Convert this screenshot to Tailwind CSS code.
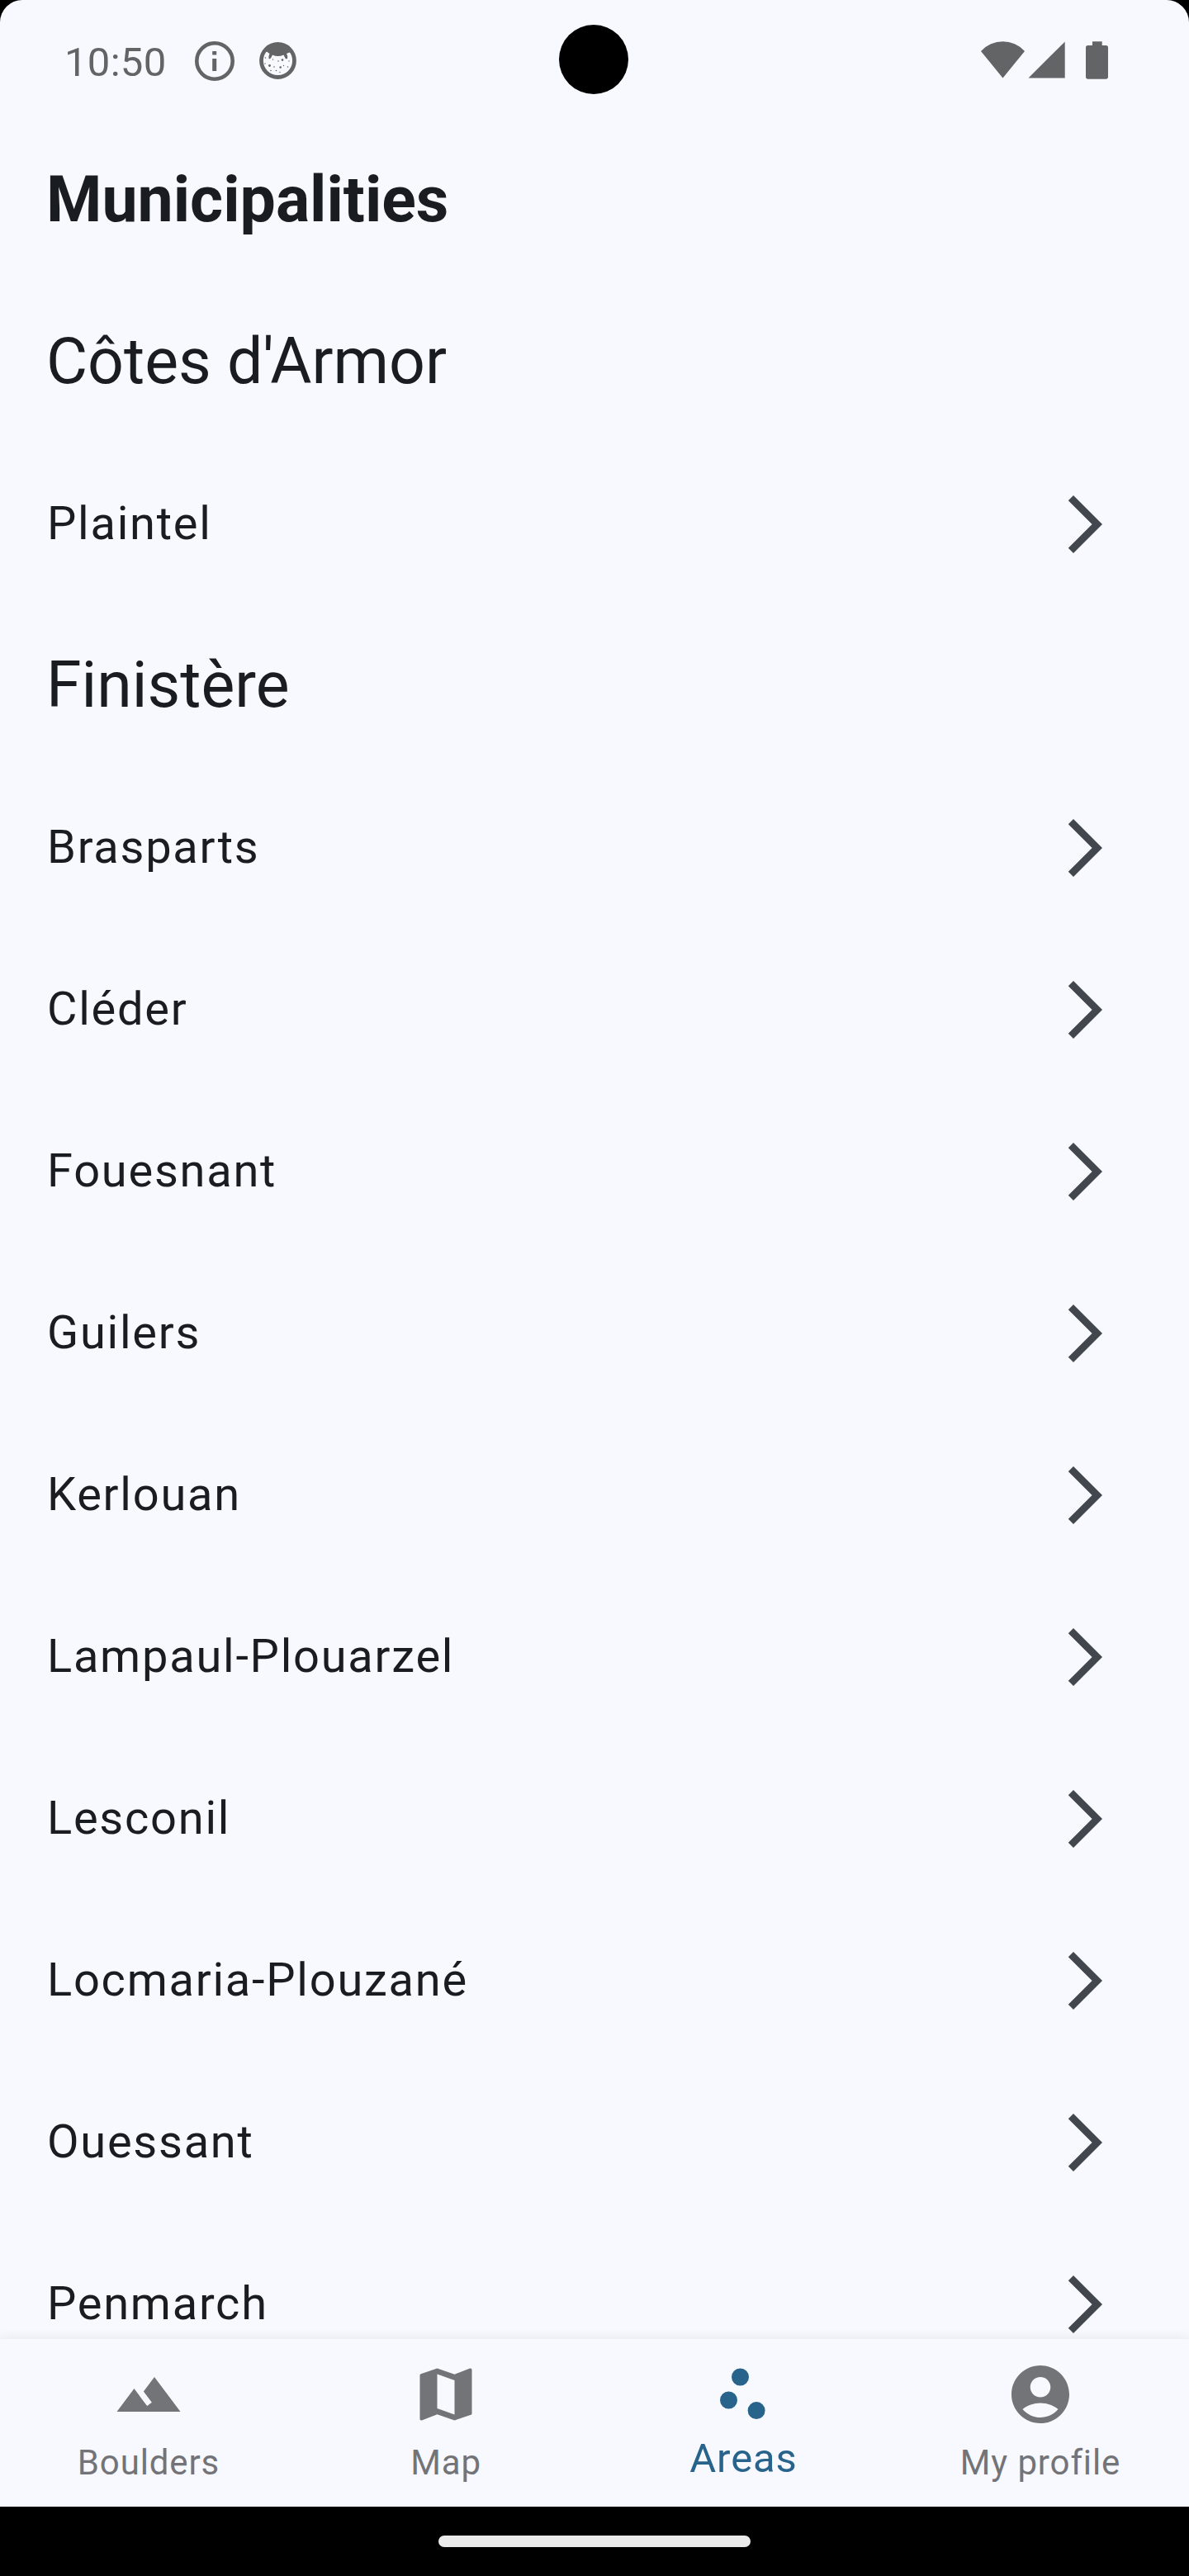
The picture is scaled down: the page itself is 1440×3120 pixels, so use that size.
<!DOCTYPE html>
<html lang="en">
<head>
<meta charset="utf-8">
<title>Municipalities</title>
<script src="https://cdn.jsdelivr.net/npm/@tailwindcss/browser@4"></script>
</head>
<body class="bg-black">
<div class="relative flex h-[3120px] w-[1440px] flex-col overflow-hidden bg-black font-[Roboto,sans-serif] text-[#191c20]">
  <div class="flex h-[3036px] flex-col overflow-hidden rounded-t-[27px] bg-[#f8f9ff]">
    <header class="flex h-[145px] shrink-0 items-start justify-between pl-[78px] pr-[98px] text-[#636466]">
      <div class="flex pt-[47px]">
        <span class="w-[158px] text-[49px] leading-[58px] tracking-[0.3px]">10:50</span>
        <svg class="mt-[3px] size-[48px]" viewBox="0 0 48 48"><circle cx="24" cy="24" r="21.7" fill="none" stroke="currentColor" stroke-width="4.6"/><path fill="currentColor" d="M21.2 12h5v4.500h-5zM21.200 21h5v15h-5z"/></svg>
        <svg class="ml-[30px] mt-[4px] size-[45px]" viewBox="0 0 45 45" fill="currentColor"><circle cx="22.500" cy="22.500" r="20" fill="none" stroke="currentColor" stroke-width="4.800"/><path d="M5 13 Q12 2 22.500 2 T40 13 L36.500 12.500 L33 14 Q35 17 34 20 Q31.500 21 31 18.500 L29.500 15.500 Q22.500 18.500 16 15.500 L14.500 18.500 Q13.500 21 11.500 20 Q11 17 12.500 14 L9 11.500z"/><circle cx="12.500" cy="28.500" r="1.400"/><circle cx="25.700" cy="30.500" r="1.300"/><circle cx="28" cy="21.600" r="1.300"/><circle cx="16.500" cy="21" r=".7"/><circle cx="23" cy="23" r=".8"/><circle cx="18" cy="30" r=".8"/><circle cx="14" cy="34.500" r=".8"/><circle cx="20.500" cy="34.500" r=".8"/><circle cx="25" cy="36.500" r=".7"/><circle cx="29.500" cy="28.500" r=".7"/><circle cx="34.500" cy="30" r=".8"/><circle cx="36" cy="23" r=".7"/><circle cx="7.500" cy="19" r=".8"/><circle cx="7" cy="26" r=".7"/></svg>
      </div>
      <div class="flex items-start pt-[50px]">
        <svg class="h-[45px] w-[53px]" viewBox="0 0 53 45" fill="currentColor"><path d="M0 12 A35.900 35.900 0 0 1 53 12 L26.500 44.500z"/></svg>
        <svg class="ml-[4px] h-[45px] w-[45px]" viewBox="0 0 45 45" fill="currentColor"><path d="M.5 44.500 L44.700 .5 V44.500z"/></svg>
        <svg class="ml-[25px] h-[46px] w-[27px]" viewBox="0 0 27 46" fill="currentColor"><path d="M8 .3h11.700V5H24.500a2.500 2.500 0 0 1 2.500 2.500V43a2.700 2.700 0 0 1-2.700 2.700H2.700A2.700 2.700 0 0 1 0 43V7.500A2.500 2.500 0 0 1 2.500 5H8z"/></svg>
      </div>
    </header>
    <h1 class="flex h-[196px] shrink-0 items-center px-[56px] pb-[2px] text-[77px] font-bold leading-[98px]">Municipalities</h1>
    <main id="list" class="h-[2492px] shrink-0 overflow-hidden"></main>
    <nav id="nav" class="relative flex h-[203px] shrink-0 bg-[#f8f9ff] text-[#737478] shadow-[0_0_14px_rgba(0,0,0,0.09)]"></nav>
  </div>
  <footer class="flex h-[84px] justify-center pt-[35px]"><div class="h-[14px] w-[378px] rounded-full bg-[#ebebeb]"></div></footer>
  <div class="absolute left-[677px] top-[30px] size-[84px] rounded-full bg-black"></div>
</div>
<script>
const groups = [
  ["Côtes d'Armor", ["Plaintel"]],
  ["Finistère", ["Brasparts", "Cléder", "Fouesnant", "Guilers", "Kerlouan", "Lampaul-Plouarzel", "Lesconil", "Locmaria-Plouzané", "Ouessant", "Penmarch"]],
];
document.getElementById("list").innerHTML = groups.map(([name, towns]) =>
  `<h2 class="flex h-[196px] items-center px-[56px] pb-[2px] text-[77px] leading-[98px]">${name}</h2>` +
  towns.map(t => `<div class="flex h-[196px] items-center justify-between pl-[57px] pr-[84px]"><span class="pb-[2px] text-[56px] leading-[84px] tracking-[1.75px]">${t}</span><svg class="size-[84px] text-[#42474e]" viewBox="0 0 24 24" fill="currentColor"><path d="M6.23 20.23 8 22l10-10L8 2 6.230 3.770 14.460 12z"/></svg></div>`).join("")
).join("");
const tabs = [
  ["Boulders", "M14 6l-3.750 5 2.850 3.800-1.600 1.200C9.810 13.750 7 10 7 10l-6 8h22L14 6z"],
  ["Map", "M20.5 3l-.16.03L15 5.1 9 3 3.36 4.9c-.21.07-.36.25-.36.48V20.5c0 .28.22.5.5.5l.16-.03L9 18.9l6 2.1 5.64-1.9c.21-.07.36-.25.36-.48V3.5c0-.28-.22-.5-.5-.5zM15 19l-6-2.11V5l6 2.11V19z"],
  ["Areas", "M4 14a3 3 0 1 0 6 0a3 3 0 1 0-6 0zM8 6a3 3 0 1 0 6 0a3 3 0 1 0-6 0zM13.6 17.6a3 3 0 1 0 6 0a3 3 0 1 0-6 0z"],
  ["My profile", "M12 2C6.48 2 2 6.48 2 12s4.48 10 10 10 10-4.48 10-10S17.52 2 12 2zm0 4c1.93 0 3.5 1.57 3.5 3.5S13.93 13 12 13s-3.5-1.57-3.5-3.5S10.07 6 12 6zm0 14c-2.03 0-4.43-.82-6.14-2.88C7.55 15.8 9.68 15 12 15s4.45.8 6.14 2.12C16.43 19.18 14.03 20 12 20z"],
];
document.getElementById("nav").innerHTML = tabs.map(([t, d]) =>
  `<div class="flex flex-1 flex-col items-center pt-[25px] ${t === "Areas" ? "text-[#28638c]" : ""}"><svg class="size-[84px]" viewBox="0 0 24 24" fill="currentColor"><path d="${d}"/></svg><span class="${t === "Areas" ? "mt-[1px] pl-[1px] text-[49px] leading-[70px]" : "mt-[6px] text-[42px] leading-[70px]"} tracking-[0.875px]">${t}</span></div>`).join("");
</script>
</body>
</html>
